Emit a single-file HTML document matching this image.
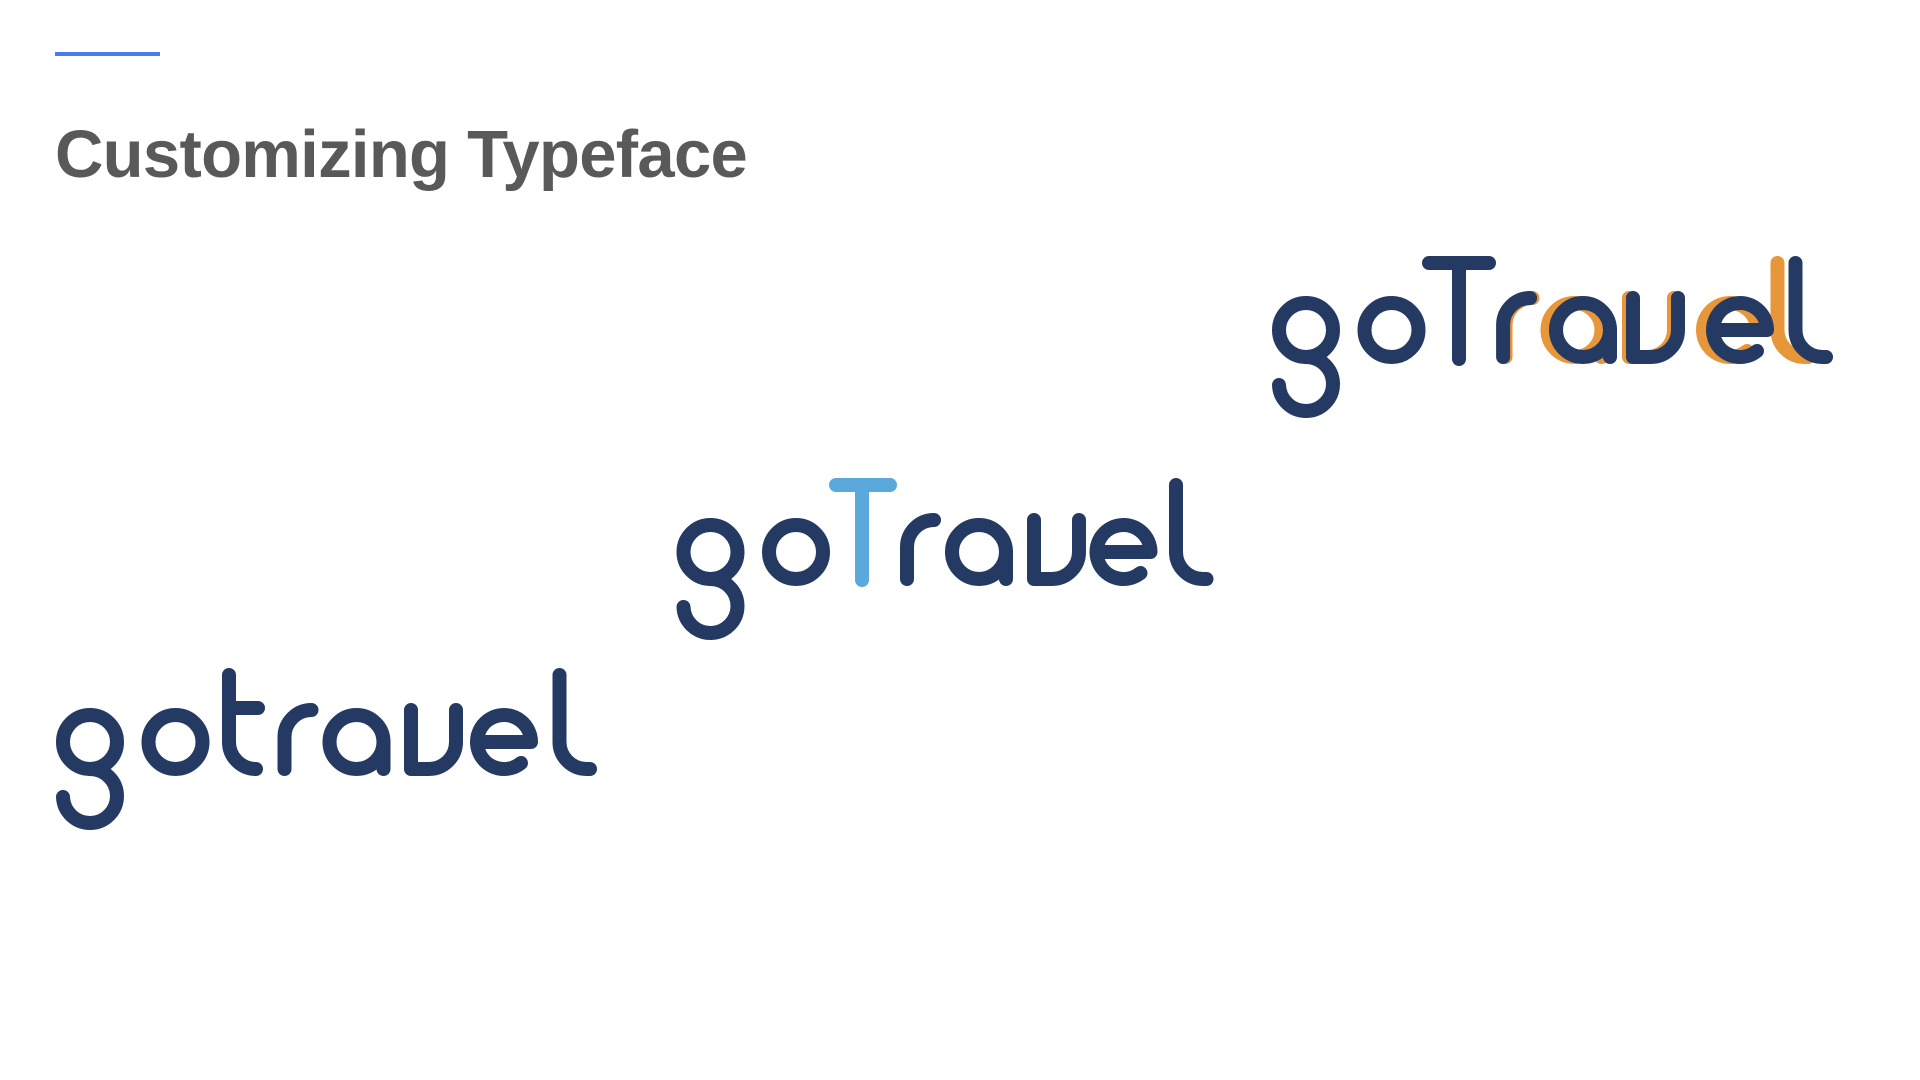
<!DOCTYPE html>
<html><head><meta charset="utf-8"><style>
html,body{margin:0;padding:0;background:#fff;width:1920px;height:1080px;overflow:hidden;position:relative}
.bar{position:absolute;left:55px;top:52px;width:105px;height:4px;background:#4a7cf0}
h1{position:absolute;left:55px;top:116px;margin:0;font-family:"Liberation Sans",sans-serif;font-weight:bold;font-size:67px;color:#595959;letter-spacing:-0.7px;white-space:nowrap;line-height:normal}
svg{position:absolute;left:0;top:0}
</style></head><body>
<div class="bar"></div>
<h1>Customizing Typeface</h1>
<svg width="1920" height="1080" viewBox="0 0 1920 1080">
<defs>
<g id="g"><circle cx="90" cy="742" r="27"/><path d="M90,769 A27 27 0 1 1 63,797"/></g>
<g id="o"><circle cx="175.5" cy="742" r="27"/></g>
<g id="r"><path d="M284.5,769 V737 A27 27 0 0 1 311.5,710"/></g>
<g id="a"><circle cx="356.5" cy="742" r="27"/><path d="M383.5,742 V769"/></g>
<g id="v"><path d="M411,710 V769 H429 A27 27 0 0 0 456,742 V710"/></g>
<g id="e"><path d="M477,742 H531 A27 27 0 1 0 521,763"/></g>
<g id="l"><path d="M559.5,675 V742 A27 27 0 0 0 586.5,769 H590"/></g>
</defs>
<g fill="none" stroke="#253a63" stroke-width="14" stroke-linecap="round" stroke-linejoin="round">
  <use href="#g"/><use href="#o"/>
  <path d="M229,675 V742 A27 27 0 0 0 256,769 M229,708 H258"/>
  <use href="#r"/><use href="#a"/><use href="#v"/><use href="#e"/><use href="#l"/>
  <g transform="translate(620.5,-190)">
    <use href="#g"/><use href="#o"/>
    <use href="#r" x="2"/><use href="#a" x="2"/><use href="#v" x="2.5"/><use href="#e" x="-1"/><use href="#l" x="-4"/>
  </g>
  <path d="M836,485 H890 M862,485 V580" stroke="#5aa8dc"/>
  <g transform="translate(1218,-412)" stroke="#e8963a">
    <use href="#r" x="3"/><use href="#a"/><use href="#v"/><use href="#e" x="8"/><use href="#l"/>
  </g>
  <g transform="translate(1216,-412)">
    <use href="#g"/><use href="#o"/>
    <use href="#r" x="2.6"/><use href="#a" x="10.5"/><use href="#v" x="6"/><use href="#e" x="20"/><use href="#l" x="20"/>
  </g>
  <path d="M1429,263 H1489 M1459,263 V359"/>
</g>
</svg>
</body></html>
